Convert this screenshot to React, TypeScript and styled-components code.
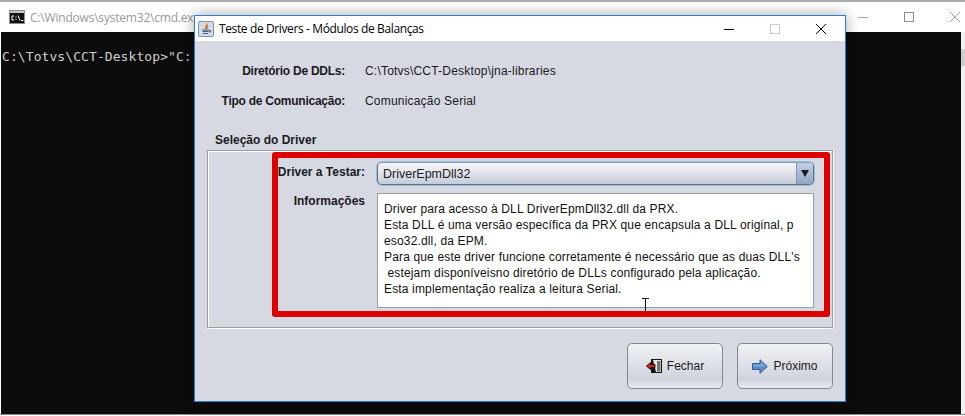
import styled, { createGlobalStyle } from 'styled-components';

const GlobalStyle = createGlobalStyle`
	html, body {
		margin: 0;
		padding: 0;
		background: #ffffff;
		overflow: hidden;
	}
`;

const infoLines = [
	'Driver para acesso à DLL DriverEpmDll32.dll da PRX.',
	'Esta DLL é uma versão específica da PRX que encapsula a DLL original, p',
	'eso32.dll, da EPM.',
	'Para que este driver funcione corretamente é necessário que as duas DLL\'s',
	' estejam disponíveisno diretório de DLLs configurado pela aplicação.',
	'Esta implementação realiza a leitura Serial.',
];

const CmdIcon = () => (
	<svg width="16" height="14" viewBox="0 0 16 14">
		<rect x="0.5" y="0.5" width="15" height="13" fill="#111" stroke="#8c8c8c" />
		<rect x="1" y="1" width="14" height="2" fill="#c8c8c8" />
		<path d="M5 6H3v4h2M7 6.5v1M7 9v1M9 5.5l2 5M12 10.5h2.500" fill="none" stroke="#fff" strokeWidth="1" />
	</svg>
);

const JavaIcon = () => (
	<svg width="16" height="16" viewBox="0 0 16 16">
		<rect x="0.5" y="0.5" width="15" height="15" rx="1.500" fill="#d3dbe8" stroke="#7f93ad" />
		<path d="M8.500 2.500C10 4.500 6.500 5.500 7.500 8M10 4.500C9 6 8.500 6.500 9.500 8" fill="none" stroke="#e8701a" strokeWidth="1.400" />
		<path d="M4 9h7M4.500 10.500h6M5 12.500h5" stroke="#3f5f80" strokeWidth="1" />
		<path d="M11 9.500h1.500v1.500H11" fill="none" stroke="#3f5f80" />
	</svg>
);

const DoorIcon = () => (
	<svg width="16" height="14" viewBox="0 0 16 14">
		<rect x="5" y="0" width="11" height="14" fill="#161616" />
		<path d="M7 1h8v12H10z" fill="#e6e6e0" />
		<path d="M11 2h3.500v10.500H11z" fill="#6f7a6c" />
		<path d="M0.500 7L4.500 3.500V5.500H9V8.500H4.500V10.500z" fill="#d8201c" stroke="#2a0a0a" strokeWidth="1" />
	</svg>
);

const ArrowIcon = () => (
	<svg width="16" height="15" viewBox="0 0 16 15">
		<path d="M0.500 4.500H8V0.800L15.300 7.500L8 14.200V10.500H0.500z" fill="#5d8cc4" stroke="#2f5c96" strokeWidth="1" />
		<path d="M1.500 5.500H9V3L13.500 7.500H1.500z" fill="#7ea8d8" />
	</svg>
);

const WindowGlyph = ({ kind, color }: { kind: 'min' | 'max' | 'close'; color: string }) => (
	<svg width="12" height="12" viewBox="0 0 12 12">
		{kind === 'min' && <path d="M1 6.500h10" stroke={color} />}
		{kind === 'max' && <rect x="1.500" y="1.500" width="9" height="9" fill="none" stroke={color} />}
		{kind === 'close' && <path d="M1 1l10 10M11 1L1 11" stroke={color} />}
	</svg>
);

const App = () => {
	return (
		<Desktop>
			<GlobalStyle />
			<ConsoleWindow>
				<ConsoleTitleBar>
					<CmdIcon />
					<ConsoleTitle>C:\Windows\system32\cmd.exe</ConsoleTitle>
					<ConsoleControls>
						<WindowGlyph kind="min" color="#a8a8a8" />
						<WindowGlyph kind="max" color="#8c8c8c" />
						<WindowGlyph kind="close" color="#a8a8a8" />
					</ConsoleControls>
				</ConsoleTitleBar>
				<ConsoleBody>
					<ConsoleScreen>C:\Totvs\CCT-Desktop&gt;"C:</ConsoleScreen>
					<ScrollTrack>
						<ScrollThumb />
					</ScrollTrack>
				</ConsoleBody>
			</ConsoleWindow>

			<Dialog>
				<DialogTitleBar>
					<JavaIcon />
					<DialogTitle>Teste de Drivers - Módulos de Balanças</DialogTitle>
					<DialogControls>
						<WindowGlyph kind="min" color="#000000" />
						<WindowGlyph kind="max" color="#cccccc" />
						<WindowGlyph kind="close" color="#000000" />
					</DialogControls>
				</DialogTitleBar>
				<DialogBody>
					<SummaryGrid>
						<SummaryLabel>Diretório De DDLs:</SummaryLabel>
						<SummaryValue>C:\Totvs\CCT-Desktop\jna-libraries</SummaryValue>
						<SummaryLabel>Tipo de Comunicação:</SummaryLabel>
						<SummaryValue>Comunicação Serial</SummaryValue>
					</SummaryGrid>
					<SectionTitle>Seleção do Driver</SectionTitle>
					<GroupBox>
						<GroupGrid>
							<FieldLabel $offset={2}>Driver a Testar:</FieldLabel>
							<Combo>
								<ComboText>DriverEpmDll32</ComboText>
								<ComboArrow>
									<ArrowDown />
								</ComboArrow>
							</Combo>
							<FieldLabel $offset={0}>Informações</FieldLabel>
							<InfoBox>
								{infoLines.map((line) => (
									<InfoLine key={line}>{line}</InfoLine>
								))}
							</InfoBox>
						</GroupGrid>
						<Highlight />
						<TextCursor>
							<svg width="9" height="14" viewBox="0 0 9 14">
								<path d="M1 0.500h7M4.500 0.500V13.500" stroke="#111" fill="none" />
							</svg>
						</TextCursor>
					</GroupBox>
					<ButtonRow>
						<ActionButton>
							<DoorIcon />
							Fechar
						</ActionButton>
						<ActionButton>
							<ArrowIcon />
							Próximo
						</ActionButton>
					</ButtonRow>
				</DialogBody>
			</Dialog>
		</Desktop>
	);
};

export default App;

const Desktop = styled.div`
	position: relative;
	width: 965px;
	height: 416px;
	overflow: hidden;
	background: #ffffff;
`;

const ConsoleWindow = styled.div`
	display: flex;
	flex-direction: column;
	height: 415px;
	box-sizing: border-box;
	border-top: 2px solid #ababab;
	border-bottom: 1px solid #8a8a8a;
`;

const ConsoleTitleBar = styled.div`
	display: flex;
	align-items: center;
	height: 30px;
	padding-left: 9px;
	background: #ffffff;
`;

const ConsoleTitle = styled.span`
	margin-left: 5px;
	font: 12px 'Open Sans', 'Liberation Sans', sans-serif;
	letter-spacing: -0.2px;
	color: #9a9a9a;
`;

const ConsoleControls = styled.div`
	display: flex;
	gap: 34px;
	margin-left: auto;
	padding-right: 4px;
`;

const ConsoleBody = styled.div`
	flex: 1;
	display: flex;
	margin-left: 1px;
`;

const ConsoleScreen = styled.div`
	flex: 1;
	background: #0c0c0c;
	padding: 17px 0 0 1px;
	font: 13px/16px 'DejaVu Sans Mono', 'Liberation Mono', monospace;
	letter-spacing: 0.08px;
	color: #cccccc;
`;

const ScrollTrack = styled.div`
	width: 4px;
	background: #f0f0f0;
	padding-top: 17px;
`;

const ScrollThumb = styled.div`
	height: 17px;
	background: #cdcdcd;
`;

const Dialog = styled.div`
	position: absolute;
	left: 194px;
	top: 15px;
	width: 652px;
	height: 387px;
	box-sizing: border-box;
	display: flex;
	flex-direction: column;
	border: 1px solid #2a7fc9;
	box-shadow: 0 0 14px rgba(0, 0, 0, 0.35);
`;

const DialogTitleBar = styled.div`
	display: flex;
	align-items: center;
	height: 25px;
	padding-left: 3px;
	background: #ffffff;
`;

const DialogTitle = styled.span`
	margin-left: 5px;
	font: 12px 'Open Sans', 'Liberation Sans', sans-serif;
	letter-spacing: -0.38px;
	color: #000000;
`;

const DialogControls = styled.div`
	display: flex;
	gap: 34px;
	margin-left: auto;
	padding-right: 18px;
	padding-top: 1px;
`;

const DialogBody = styled.div`
	flex: 1;
	display: flex;
	flex-direction: column;
	padding: 22px 12px 0 12px;
	background: #d6d9e2;
	font: 12px/16px 'Liberation Sans', Arial, sans-serif;
	color: #000000;
`;

const SummaryGrid = styled.div`
	display: grid;
	grid-template-columns: 138px 1fr;
	column-gap: 20px;
	row-gap: 14px;
`;

const SummaryLabel = styled.div`
	font-weight: 700;
	text-align: right;
	letter-spacing: -0.25px;
	color: #1a1a24;
`;

const SummaryValue = styled.div`
	letter-spacing: 0.2px;
	color: #1a1a24;
`;

const SectionTitle = styled.div`
	margin: 23px 0 2px 8px;
	font-weight: 700;
	color: #1a1a24;
`;

const GroupBox = styled.div`
	position: relative;
	box-sizing: border-box;
	width: 626px;
	height: 178px;
	padding: 11px 18px 0 0;
	border: 1px solid #9a9da6;
	box-shadow: inset 1px 1px 0 #ffffff, 0 1px 0 #ffffff, 1px 0 0 #ffffff;
`;

const GroupGrid = styled.div`
	display: grid;
	grid-template-columns: 157px 1fr;
	column-gap: 12px;
	row-gap: 8px;
`;

const FieldLabel = styled.div<{ $offset: number }>`
	margin-top: ${(p) => p.$offset}px;
	font-weight: 700;
	text-align: right;
	color: #1a1a24;
`;

const Combo = styled.div`
	display: flex;
	align-items: stretch;
	box-sizing: border-box;
	height: 23px;
	border: 1px solid #5e7089;
	border-top-color: #7fa0c6;
	border-radius: 5px;
	box-shadow: 0 0 0 1px rgba(115, 164, 209, 0.55);
	background: linear-gradient(#f4f5f8, #e6e8ee 40%, #c6cad5);
	overflow: hidden;
`;

const ComboText = styled.div`
	flex: 1;
	padding: 3px 0 0 5px;
	font-size: 12.500px;
	color: #1a1a24;
`;

const ComboArrow = styled.div`
	display: flex;
	align-items: center;
	justify-content: center;
	width: 16px;
	border-left: 1px solid #8097b2;
	background: linear-gradient(#c3d0e0, #a5b8cf 60%, #8fa5c0);
`;

const ArrowDown = styled.div`
	width: 0;
	height: 0;
	border-left: 4px solid transparent;
	border-right: 4px solid transparent;
	border-top: 7px solid #1a1a24;
`;

const InfoBox = styled.div`
	box-sizing: border-box;
	height: 115px;
	padding: 7px 6px 0 6px;
	border: 1px solid #9a9da6;
	background: #ffffff;
	letter-spacing: 0.155px;
	color: #111111;
`;

const InfoLine = styled.div`
	white-space: pre;
`;

const Highlight = styled.div`
	position: absolute;
	left: 64px;
	top: 1px;
	width: 558px;
	height: 165px;
	box-sizing: border-box;
	border: 6px solid #dd0000;
	border-radius: 3px;
	pointer-events: none;
`;

const TextCursor = styled.div`
	position: absolute;
	left: 433px;
	top: 147px;
	line-height: 0;
`;

const ButtonRow = styled.div`
	display: flex;
	justify-content: flex-end;
	gap: 14px;
	margin-top: 15px;
`;

const ActionButton = styled.button`
	display: flex;
	align-items: center;
	justify-content: center;
	gap: 5px;
	width: 96px;
	height: 46px;
	padding: 0;
	border: 1px solid #85888f;
	border-radius: 5px;
	background: linear-gradient(#f0f1f5, #d8dbe3 60%, #cfd3dc 80%, #e8eaf0);
	font: 12px 'Liberation Sans', Arial, sans-serif;
	color: #1a1a24;
`;
